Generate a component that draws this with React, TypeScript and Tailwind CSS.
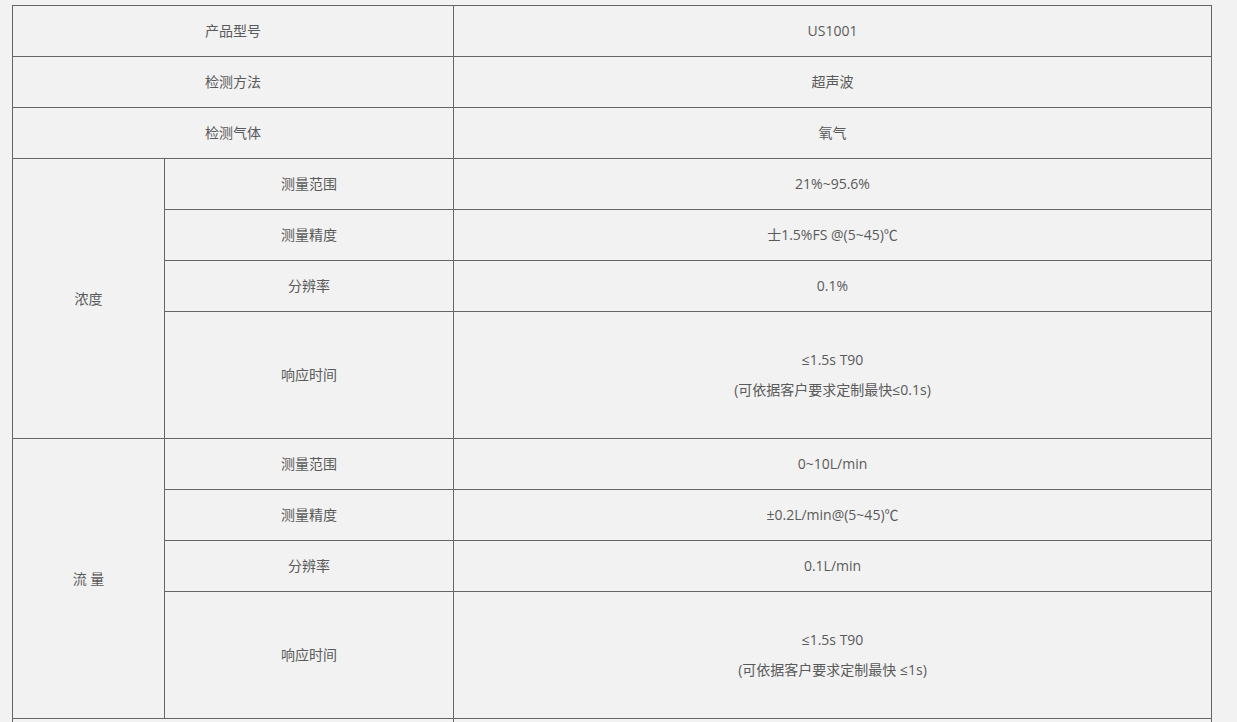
import React from 'react';

const cell = 'border border-[#666] text-center align-middle';

const Group = ({ title, rows }: { title: string; rows: { label: string; value: React.ReactNode; tall?: boolean }[] }) => (
  <>
    {rows.map((r, i) => (
      <tr key={r.label} className={r.tall ? 'h-[127px]' : 'h-[51px]'}>
        {i === 0 && (
          <td rowSpan={rows.length} className={cell}>
            {title}
          </td>
        )}
        <td className={cell}>{r.label}</td>
        <td className={cell}>{r.value}</td>
      </tr>
    ))}
  </>
);

const App = () => {
  return (
    <div
      className="min-h-screen bg-[#f2f2f2] pt-[5px] pl-[12px] text-[14px] leading-[20px] text-[#5a5a5a]"
      style={{ fontFamily: '"Open Sans", "Noto Sans CJK SC", sans-serif' }}
    >
      <table className="w-[1199px] table-fixed border-collapse">
        <colgroup>
          <col className="w-[152px]" />
          <col className="w-[289px]" />
          <col className="w-[758px]" />
        </colgroup>
        <tbody>
          <tr className="h-[51px]">
            <td colSpan={2} className={cell}>产品型号</td>
            <td className={cell}>US1001</td>
          </tr>
          <tr className="h-[51px]">
            <td colSpan={2} className={cell}>检测方法</td>
            <td className={cell}>超声波</td>
          </tr>
          <tr className="h-[51px]">
            <td colSpan={2} className={cell}>检测气体</td>
            <td className={cell}>氧气</td>
          </tr>
          <Group
            title="浓度"
            rows={[
              { label: '测量范围', value: '21%~95.6%' },
              { label: '测量精度', value: '士1.5%FS @(5~45)℃' },
              { label: '分辨率', value: '0.1%' },
              {
                label: '响应时间',
                tall: true,
                value: (
                  <div className="leading-[30px]">
                    <p>≤1.5s T90</p>
                    <p>(可依据客户要求定制最快≤0.1s)</p>
                  </div>
                ),
              },
            ]}
          />
          <Group
            title="流 量"
            rows={[
              { label: '测量范围', value: '0~10L/min' },
              { label: '测量精度', value: '±0.2L/min@(5~45)℃' },
              { label: '分辨率', value: '0.1L/min' },
              {
                label: '响应时间',
                tall: true,
                value: (
                  <div className="leading-[30px]">
                    <p>≤1.5s T90</p>
                    <p>(可依据客户要求定制最快 ≤1s)</p>
                  </div>
                ),
              },
            ]}
          />
          <tr className="h-[51px]">
            <td colSpan={2} className={cell}></td>
            <td className={cell}></td>
          </tr>
        </tbody>
      </table>
    </div>
  );
};

export default App;
